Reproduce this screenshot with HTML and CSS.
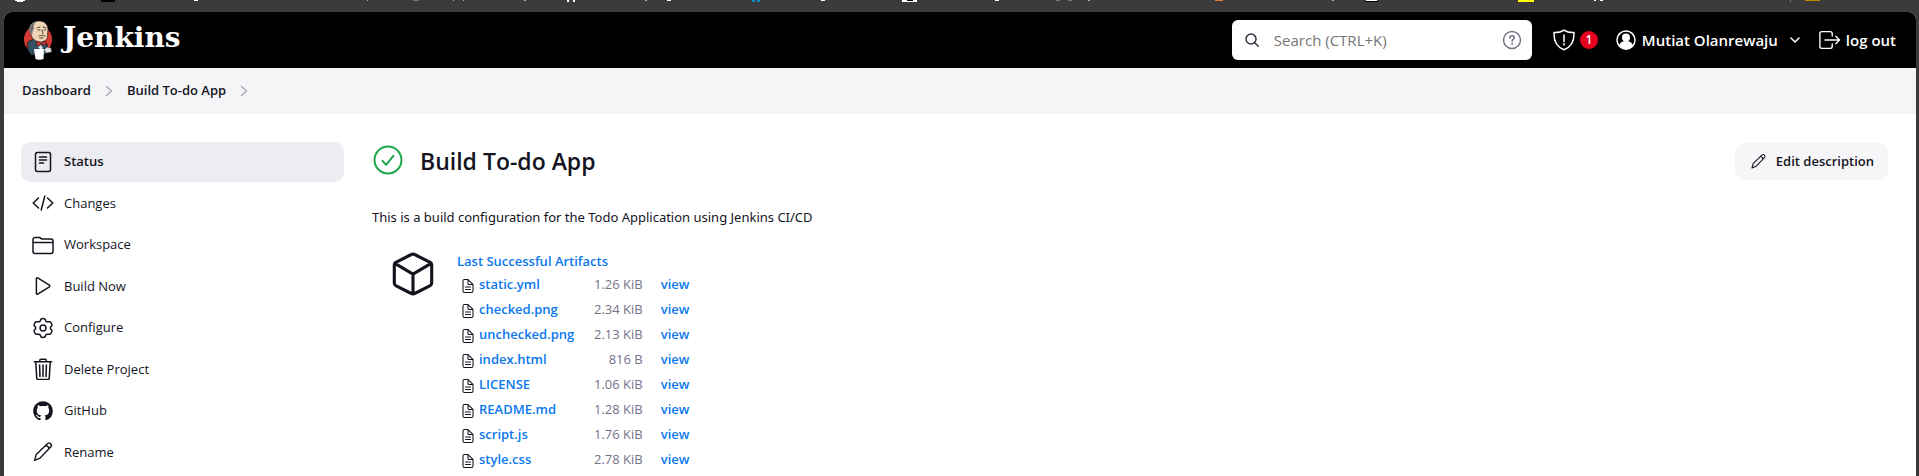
FILE: index.html
```html
<!DOCTYPE html>
<html lang="en">
<head>
<meta charset="utf-8">
<title>Build To-do App [Jenkins]</title>
<link rel="stylesheet" href="styles.css">
</head>
<body>
<svg class="defs" aria-hidden="true">
  <symbol id="doc" viewBox="0 0 512 512"><path d="M416 221.25V416a48 48 0 01-48 48H144a48 48 0 01-48-48V96a48 48 0 0148-48h98.75a32 32 0 0122.62 9.37l141.26 141.26a32 32 0 019.37 22.62z"/><path d="M256 56v120a32 32 0 0032 32h120M176 288h160M176 368h160"/></symbol>
  <symbol id="pencil" viewBox="0 0 24 24"><path d="M2.8 21.2l1.8-6.4L16.8 2.9c1.1-1 2.6-1 3.6 0s1 2.500 0 3.600L8.800 18.600z M14.800 4.900c2 .3 3.500 1.800 3.800 3.600"/></symbol>
  <symbol id="chevron" viewBox="0 0 8 12"><path d="M1.500 1.500L6.500 6l-5 4.500"/></symbol>
</svg>

<div class="strip" aria-hidden="true">
  <svg width="100%" height="2" viewBox="0 0 1919 2" preserveAspectRatio="none">
    <path fill="#fff" d="M15 0h10v1h-2v1h-6v-1h-2zM194 0h4v1h-4zM567 0h2v2h-2zM573 0h2v2h-2zM667 0h4v1h-4zM821 0h4v1h-4zM902 0h15v2h-15zM995 0h4v1h-4zM1366 0h11v1h-11zM1594 0h2v1h-2zM1600 0h3v1h-3z"/>
    <path fill="#000" d="M101 0h14v2h-14zM907 0h6v1h-6zM1365 1h13v1h-13z"/>
    <path fill="#aaa" d="M367 0h1v1h-1zM453 0h1v1h-1zM463 0h1v1h-1zM524 0h2v1h-2zM645 0h2v1h-2zM1088 0h2v1h-2zM1332 0h2v1h-2z"/>
    <path fill="#777" d="M413 0h6v1h-6zM1056 0h4v1h-4zM1068 0h4v1h-4zM1790 0h1v2h-1z"/>
    <path fill="#0a8cc4" d="M752 0h3v2h-3zM757 0h3v2h-3z"/>
    <path fill="#ee7733" d="M1215 0h8v1h-8z"/>
    <path fill="#ff0" d="M1518 0h16v2h-16z"/>
    <path fill="#b58900" d="M1805 0h15v1h-15z"/>
  </svg>
</div>

<div class="window">
  <header class="header">
    <a class="brand" href="#">
      <svg class="mascot" viewBox="0 0 30 40" aria-hidden="true">
        <circle cx="15" cy="19.500" r="14" fill="#d33833"/>
        <path d="M5 22l6-3 9 1 4 4 1 6-2 4-15 1-3-5z" fill="#335061" stroke="#101820" stroke-width=".8"/>
        <path d="M7 12C5 6 10 1 16 1c6 0 9 4 9 9l-.5 4c.5 5-2 7-6 8-4 .3-7-1-9-4z" fill="#f0d6b7" stroke="#322" stroke-width=".7"/>
        <path d="M13 2C8 3 6 6 7 12l2 3 1-5 1-1c-1-3 0-5 2-7z" fill="#6d6b6d" stroke="#aaa" stroke-width=".5"/>
        <path d="M14 8l3-1M20 7l3 1M15 10h2M21 10h1.500M19 10l1 4M16 16c3-1 4 0 6 0M17 18h3" fill="none" stroke="#432" stroke-width=".9"/>
        <path d="M14 21l4 2 5-2v4l-4-1-5 2z" fill="#d33833" stroke="#411" stroke-width=".5"/>
        <path d="M15 27l3-2 2 3-2 2z" fill="#dce4e8"/>
        <path d="M11 29h10l-.500 10c-2 1-6 1-8 0z" fill="#fff"/>
        <path d="M21 30l3-3 4 1 .500 4-5 1z" fill="#ddd" stroke="#555" stroke-width=".6"/>
      </svg>
      <span class="wordmark">Jenkins</span>
    </a>
    <form class="search" role="search">
      <svg class="search-icon" viewBox="0 0 14 14" aria-hidden="true"><circle cx="6" cy="6" r="5"/><path d="M9.700 9.700l3.600 3.600"/></svg>
      <input class="search-input" type="search" placeholder="Search (CTRL+K)" aria-label="Search">
      <a class="help" href="#" aria-label="Help"><svg viewBox="0 0 20 20"><circle cx="10" cy="10" r="8.500"/><path d="M7.800 8c0-1.400 1-2.200 2.300-2.200 1.200 0 2.200.8 2.200 2 0 1.500-2.200 1.700-2.200 3.500M10.100 13.200v1.300"/></svg></a>
    </form>
    <a class="alerts" href="#" aria-label="Security warnings">
      <svg class="icon" viewBox="0 0 22 22" aria-hidden="true"><path d="M11 1.200C8.500 3 5 3.700 1 3.600c-.3 8 2.500 14.500 10 17.200 7.500-2.700 10.300-9.200 10-17.200-4 .1-7.500-.6-10-2.400zM11 6v6.500M11 14.500v1.500"/></svg>
      <span class="badge">1</span>
    </a>
    <a class="user" href="#">
      <svg class="icon-user" viewBox="0 0 20 20" aria-hidden="true"><circle cx="10" cy="10" r="9" fill="none" stroke="#fff" stroke-width="1.500"/><circle cx="10" cy="7.500" r="3.300" fill="#fff"/><path d="M3.800 15.600c1-3 3.300-3.900 6.200-3.900s5.200.9 6.200 3.900A9 9 0 0110 19a9 9 0 01-6.200-3.400z" fill="#fff"/></svg>
      <span>Mutiat Olanrewaju</span>
      <svg class="icon-down" viewBox="0 0 10 6" aria-hidden="true"><path d="M1 1l4 4 4-4"/></svg>
    </a>
    <a class="logout" href="#">
      <svg class="icon" viewBox="24 16 480 480" aria-hidden="true"><path stroke-width="30" d="M312 344v56a40 40 0 01-40 40H84a40 40 0 01-40-40V112a40 40 0 0140-40h180c22 0 48 18 48 40v56M392 336l80-80-80-80M156 256h310"/></svg>
      <span>log out</span>
    </a>
  </header>

  <nav class="crumbs" aria-label="Breadcrumb">
    <a href="#">Dashboard</a>
    <svg class="crumb-arrow"><use href="#chevron"/></svg>
    <a href="#">Build To-do App</a>
    <svg class="crumb-arrow"><use href="#chevron"/></svg>
  </nav>

  <div class="page">
    <nav class="tasks" aria-label="Project">
      <a class="task task-active" href="#"><svg viewBox="0 0 22 22"><rect x="3.500" y="1.500" width="15" height="19" rx="2"/><path d="M7.500 6h7M7.500 9h7M7.500 12h4"/></svg>Status</a>
      <a class="task" href="#"><svg viewBox="0 0 22 22"><path d="M6.500 6L1.200 11l5.300 5M15.500 6l5.300 5-5.300 5M12.800 4L9.200 18"/></svg>Changes</a>
      <a class="task" href="#"><svg viewBox="0 0 22 22"><path d="M3 3.500h4.500L10 5h9a2 2 0 012 2v10.500a2 2 0 01-2 2H3a2 2 0 01-2-2v-12a2 2 0 012-2zM1 8.500h20"/></svg>Workspace</a>
      <a class="task" href="#"><svg viewBox="0 0 512 512"><path stroke-width="34" d="M102 84v344c0 17 17 27 31 19l272-172c14-9 14-29 0-38L133 65c-14-8-31 2-31 19z"/></svg>Build Now</a>
      <a class="task" href="#"><svg viewBox="0 0 24 24"><path stroke-width="1.600" d="M9.500 2.500Q12 .8 14.500 2.500L15 4.300Q16 5.600 17.500 5.200L19.500 5.100Q22 6.700 21.700 9.300L20.500 10.600Q19.600 12 20.500 13.400L21.700 14.700Q22 17.300 19.500 18.900L17.500 18.800Q16 18.400 15 19.700L14.500 21.500Q12 23.200 9.500 21.500L9 19.700Q8 18.400 6.500 18.800L4.500 18.900Q2 17.300 2.300 14.700L3.500 13.400Q4.400 12 3.500 10.600L2.300 9.300Q2 6.700 4.500 5.100L6.500 5.200Q8 5.600 9 4.300z"/><circle cx="12" cy="12" r="3.200" stroke-width="1.600"/></svg>Configure</a>
      <a class="task" href="#"><svg viewBox="24 24 464 464"><path stroke-width="32" d="M104 112l20 336c1 18 14 32 32 32h200c18 0 31-14 32-32l20-336M72 104h368M188 104V72c0-14 10-24 24-24h88c14 0 24 10 24 24v32M256 172v244M184 172l8 244M328 172l-8 244"/></svg>Delete Project</a>
      <a class="task" href="#"><svg viewBox="-1 -1 18 18"><path class="solid" d="M8 0C3.580 0 0 3.580 0 8c0 3.540 2.290 6.530 5.470 7.590.4.070.55-.17.55-.38 0-.19-.01-.82-.01-1.490-2.010.37-2.530-.49-2.690-.94-.09-.23-.48-.94-.82-1.130-.28-.15-.68-.52-.01-.53.63-.01 1.080.58 1.230.82.72 1.210 1.870.87 2.330.66.070-.52.28-.87.51-1.070-1.780-.2-3.640-.89-3.640-3.950 0-.87.31-1.590.82-2.150-.08-.2-.36-1.020.08-2.120 0 0 .67-.21 2.200.82.64-.18 1.320-.27 2-.27s1.360.09 2 .27c1.530-1.040 2.200-.82 2.200-.82.44 1.100.16 1.920.08 2.120.51.56.82 1.270.82 2.150 0 3.070-1.870 3.750-3.650 3.950.29.25.54.73.54 1.480 0 1.070-.01 1.930-.01 2.200 0 .21.15.46.55.38A8.010 8.010 0 0016 8c0-4.420-3.580-8-8-8z"/></svg>GitHub</a>
      <a class="task" href="#"><svg><use href="#pencil"/></svg>Rename</a>
    </nav>

    <main class="main">
      <div class="title-row">
        <svg class="ok" viewBox="0 0 32 32" role="img" aria-label="Success"><circle cx="16" cy="15" r="13.500"/><path d="M10.500 15.800l3.600 4 7.200-9"/></svg>
        <h1>Build To-do App</h1>
        <button class="edit" type="button"><svg><use href="#pencil"/></svg>Edit description</button>
      </div>
      <p class="description">This is a build configuration for the Todo Application using Jenkins CI/CD</p>
      <section class="artifacts">
        <svg class="cube" viewBox="24 16 464 480" aria-hidden="true"><path stroke-width="34" d="M460 354V158a32 32 0 00-16-28L280 46a48 48 0 00-48 0L68 130a32 32 0 00-16 28v196a32 32 0 0016 28l164 84a48 48 0 0048 0l164-84a32 32 0 0016-28zM58 140l198 118 198-118M256 470V258"/></svg>
        <div>
          <a class="link" href="#">Last Successful Artifacts</a>
          <table class="files">
            <tr><td><svg><use href="#doc"/></svg></td><td><a class="link" href="#">static.yml</a></td><td class="size">1.26 KiB</td><td><a class="link" href="#">view</a></td></tr>
            <tr><td><svg><use href="#doc"/></svg></td><td><a class="link" href="#">checked.png</a></td><td class="size">2.34 KiB</td><td><a class="link" href="#">view</a></td></tr>
            <tr><td><svg><use href="#doc"/></svg></td><td><a class="link" href="#">unchecked.png</a></td><td class="size">2.13 KiB</td><td><a class="link" href="#">view</a></td></tr>
            <tr><td><svg><use href="#doc"/></svg></td><td><a class="link" href="#">index.html</a></td><td class="size">816 B</td><td><a class="link" href="#">view</a></td></tr>
            <tr><td><svg><use href="#doc"/></svg></td><td><a class="link" href="#">LICENSE</a></td><td class="size">1.06 KiB</td><td><a class="link" href="#">view</a></td></tr>
            <tr><td><svg><use href="#doc"/></svg></td><td><a class="link" href="#">README.md</a></td><td class="size">1.28 KiB</td><td><a class="link" href="#">view</a></td></tr>
            <tr><td><svg><use href="#doc"/></svg></td><td><a class="link" href="#">script.js</a></td><td class="size">1.76 KiB</td><td><a class="link" href="#">view</a></td></tr>
            <tr><td><svg><use href="#doc"/></svg></td><td><a class="link" href="#">style.css</a></td><td class="size">2.78 KiB</td><td><a class="link" href="#">view</a></td></tr>
          </table>
        </div>
      </section>
    </main>
  </div>
</div>
</body>
</html>
```
FILE: styles.css
```css
* { box-sizing: border-box; }

html, body { height: 100%; }

body {
  display: flex;
  flex-direction: column;
  margin: 0;
  background: #3b3a39;
  color: #14141f;
  font: 13px/1.5 "Open Sans", "Noto Sans", sans-serif;
}

a { color: inherit; text-decoration: none; }

svg {
  display: block;
  flex: none;
  fill: none;
  stroke: currentColor;
  stroke-width: 1.5;
  stroke-linecap: round;
  stroke-linejoin: round;
}

.defs { position: absolute; width: 0; height: 0; }
.solid { fill: currentColor; stroke: none; }

.strip { flex: none; height: 12px; background: #3b3b3b; }
.strip svg { stroke: none; }

.window {
  flex: 1;
  margin: 0 3px 0 4px;
  border-radius: 8px 8px 0 0;
  overflow: hidden;
  background: #fff;
}

/* Header */
.header {
  display: flex;
  align-items: center;
  height: 56px;
  padding: 0 20px 0 19px;
  background: #000;
  color: #fff;
  font-size: 15px;
  font-weight: 600;
}
.brand { display: flex; align-items: center; gap: 10px; margin-right: auto; }
.mascot { width: 30px; height: 40px; stroke: none; }
.wordmark { font: 700 28px/36px "DejaVu Serif", serif; margin-bottom: 4px; }

.search {
  display: flex;
  align-items: center;
  width: 300px;
  height: 40px;
  padding: 0 10px 0 13px;
  border-radius: 6px;
  background: #fff;
  color: #333340;
}
.search-icon { width: 14px; height: 14px; }
.search-input {
  flex: 1;
  min-width: 0;
  margin-left: 15px;
  padding: 0;
  border: 0;
  outline: 0;
  background: none;
  font: 15px "Open Sans", sans-serif;
}
.search-input::placeholder { color: #757575; }
.help { color: #73738c; }
.help svg { width: 20px; height: 20px; }

.icon { width: 22px; height: 22px; }
.alerts { display: flex; align-items: center; gap: 5px; margin-left: 21px; }
.badge {
  width: 18px;
  border-radius: 9px;
  background: #e6001f;
  font-size: 12px;
  line-height: 18px;
  text-align: center;
}
.user { display: flex; align-items: center; gap: 6px; margin-left: 18px; }
.icon-user { width: 20px; height: 20px; }
.icon-down { width: 10px; height: 6px; margin-left: 6px; }
.logout { display: flex; align-items: center; gap: 5px; margin-left: 19px; }

/* Breadcrumbs */
.crumbs {
  display: flex;
  align-items: center;
  gap: 14px;
  height: 46px;
  padding: 0 18px;
  background: #f5f5f7;
  font-weight: 600;
}
.crumb-arrow { width: 8px; height: 12px; color: #a9a9b8; }

/* Layout */
.page {
  display: grid;
  grid-template-columns: 323px 1fr;
  gap: 28px;
  padding: 28px 28px 0 17px;
}

.tasks { display: flex; flex-direction: column; gap: 2px; }
.task {
  display: flex;
  align-items: center;
  gap: 10px;
  padding: 10px 11px;
  border-radius: 10px;
}
.task svg { width: 22px; height: 22px; margin: -2px 0; }
.task-active { background: #ecedf2; font-weight: 600; }

.title-row { display: flex; align-items: center; height: 38px; }
.ok { width: 32px; height: 32px; color: #1ea64b; stroke-width: 2; }
h1 { margin: 0 auto 0 16px; font-size: 23px; font-weight: 600; line-height: 38px; }
.edit {
  display: flex;
  align-items: center;
  gap: 9px;
  height: 37px;
  padding: 0 14px 0 15px;
  border: 0;
  border-radius: 10px;
  background: #f6f6f8;
  color: inherit;
  font: 600 13px "Open Sans", sans-serif;
}
.edit svg { width: 17px; height: 17px; }

.description { margin: 28px 0 0; font-family: "Noto Sans", sans-serif; }

.artifacts { display: flex; gap: 22px; margin: 24px 0 0 19px; }
.cube { width: 44px; height: 44px; }
.link { color: #0b78ee; font-weight: 600; }
.files { margin: 1px 0 0 3px; border-collapse: collapse; line-height: 25px; }
.files td { padding: 0; }
.files td:first-child { width: 19px; }
.files td:nth-child(2) { min-width: 97px; }
.files svg { width: 16px; height: 16px; margin-top: 3px; stroke-width: 34; }
.size { color: #73738c; text-align: right; }
.files .size { padding: 0 18px; }
```
